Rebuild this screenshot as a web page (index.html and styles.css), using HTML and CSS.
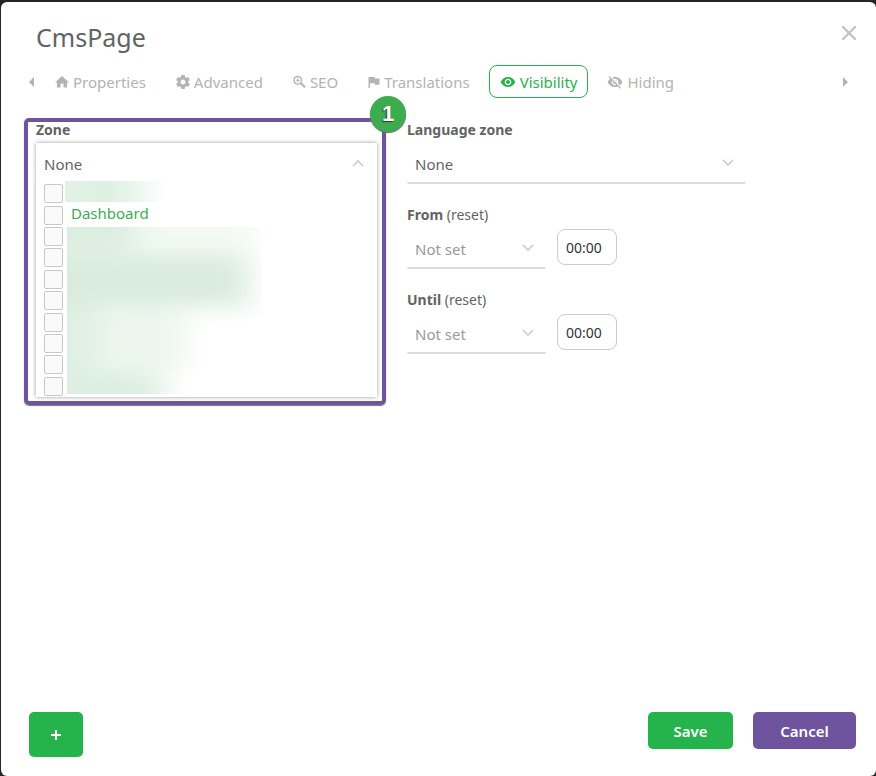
FILE: index.html
```html
<!DOCTYPE html>
<html lang="en">
<head>
<meta charset="utf-8">
<meta name="viewport" content="width=device-width, initial-scale=1">
<title>CmsPage</title>
<link rel="stylesheet" href="styles.css">
</head>
<body>
<main class="dialog" role="dialog" aria-labelledby="title">
  <header class="dialog-header">
    <h1 id="title">CmsPage</h1>
    <button class="close" type="button" aria-label="Close">
      <svg width="16" height="16" viewBox="0 0 16 16"><path d="M2 2l12 12M14 2L2 14" fill="none" stroke="#c2c2c2" stroke-width="2.4" stroke-linecap="round"/></svg>
    </button>
  </header>

  <nav class="tabs">
    <button class="scroll" type="button" aria-label="Previous tabs"><svg width="5" height="10" viewBox="0 0 5 10"><path d="M5 0v10L0 5z"/></svg></button>
    <div class="tab-list">
      <button class="tab" type="button"><svg width="14" height="14" viewBox="0 0 14 14"><path d="M7 1l7 6.500h-2V12.500H8.500V8.500h-3v4H2V7.500H0z"/></svg>Properties</button>
      <button class="tab" type="button"><svg width="14" height="14" viewBox="2 2 20 20"><path d="M19.430 12.980c.040-.320.070-.640.070-.980s-.030-.660-.070-.980l2.110-1.650c.190-.150.240-.420.120-.640l-2-3.460c-.120-.220-.390-.300-.610-.220l-2.490 1c-.520-.400-1.080-.730-1.690-.980l-.380-2.650C14.460 2.180 14.250 2 14 2h-4c-.250 0-.460.180-.490.420l-.380 2.650c-.610.250-1.170.590-1.690.980l-2.490-1c-.230-.090-.490 0-.610.220l-2 3.460c-.130.220-.070.490.120.640l2.110 1.650c-.040.320-.070.650-.070.980s.030.660.070.980l-2.110 1.650c-.190.150-.240.420-.120.640l2 3.460c.120.220.390.300.610.220l2.490-1c.520.400 1.080.730 1.690.980l.380 2.650c.030.240.240.420.490.420h4c.250 0 .460-.180.490-.420l.380-2.650c.610-.250 1.170-.590 1.690-.980l2.490 1c.230.090.490 0 .610-.220l2-3.460c.120-.220.070-.490-.120-.640l-2.110-1.650zM12 15.500c-1.930 0-3.500-1.570-3.500-3.500s1.570-3.500 3.500-3.500 3.500 1.570 3.500 3.500-1.570 3.500-3.500 3.500z"/></svg>Advanced</button>
      <button class="tab" type="button"><svg width="13" height="14" viewBox="0 0 13 14"><g fill="none" stroke="currentColor"><circle cx="4.800" cy="5.300" r="3.800" stroke-width="1.400"/><path d="M2.800 5.300h4M4.800 3.300v4"/><path d="M7.600 8l4.400 4.300" stroke-width="2"/></g></svg>SEO</button>
      <button class="tab" type="button"><svg width="12" height="14" viewBox="0 0 12 14"><path d="M.500 2h6l.400 1.500H11.500V9.800H7L6.600 8.300H2V13H.500z"/></svg>Translations</button>
      <button class="tab active" type="button" aria-current="page"><svg width="16" height="14" viewBox="0 2 24 20"><path d="M12 4.500C7 4.500 2.730 7.610 1 12c1.730 4.390 6 7.500 11 7.500s9.270-3.110 11-7.500c-1.730-4.390-6-7.500-11-7.500zM12 17c-2.760 0-5-2.240-5-5s2.240-5 5-5 5 2.240 5 5-2.240 5-5 5zm0-8c-1.660 0-3 1.340-3 3s1.340 3 3 3 3-1.340 3-3-1.340-3-3-3z"/></svg>Visibility</button>
      <button class="tab" type="button"><svg width="16" height="14" viewBox="0 2 24 20"><path d="M12 7c2.760 0 5 2.240 5 5 0 .650-.130 1.260-.360 1.830l2.920 2.920c1.510-1.260 2.700-2.890 3.430-4.750-1.730-4.390-6-7.500-11-7.500-1.400 0-2.740.250-3.980.700l2.160 2.160C10.740 7.130 11.350 7 12 7zM2 4.270l2.280 2.280.460.460C3.080 8.300 1.780 10.020 1 12c1.730 4.390 6 7.500 11 7.500 1.550 0 3.030-.300 4.380-.840l.420.420L19.730 22 21 20.730 3.270 3 2 4.270zM7.530 9.800l1.550 1.550c-.050.210-.080.430-.080.650 0 1.660 1.340 3 3 3 .220 0 .440-.030.650-.080l1.550 1.550c-.670.330-1.410.530-2.200.530-2.760 0-5-2.240-5-5 0-.790.200-1.530.530-2.200zm4.310-.780l3.150 3.150.020-.160c0-1.660-1.340-3-3-3l-.170.010z"/></svg>Hiding</button>
    </div>
    <button class="scroll" type="button" aria-label="Next tabs"><svg width="5" height="10" viewBox="0 0 5 10"><path d="M0 0v10l5-5z"/></svg></button>
  </nav>

  <form class="fields">
    <section class="zone">
      <span class="badge">1</span>
      <label class="field-label" for="zone">Zone</label>
      <div class="panel">
        <button id="zone" class="panel-head" type="button" aria-expanded="true">None
          <svg width="12" height="8" viewBox="0 0 12 8"><path d="M1 6l5-5 5 5" fill="none" stroke="#ccc" stroke-width="1.600"/></svg>
        </button>
        <div class="options">
          <div class="option"><input type="checkbox" aria-label="Option 1"></div>
          <div class="option"><input type="checkbox" id="dashboard"><label for="dashboard">Dashboard</label></div>
          <div class="option"><input type="checkbox" aria-label="Option 3"></div>
          <div class="option"><input type="checkbox" aria-label="Option 4"></div>
          <div class="option"><input type="checkbox" aria-label="Option 5"></div>
          <div class="option"><input type="checkbox" aria-label="Option 6"></div>
          <div class="option"><input type="checkbox" aria-label="Option 7"></div>
          <div class="option"><input type="checkbox" aria-label="Option 8"></div>
          <div class="option"><input type="checkbox" aria-label="Option 9"></div>
          <div class="option"><input type="checkbox" aria-label="Option 10"></div>
          <svg class="hidden-names" width="196" height="213" viewBox="0 0 196 213" aria-hidden="true">
            <defs>
              <linearGradient id="fade"><stop offset="0" stop-color="#e1f1e5"/><stop offset=".4" stop-color="#dfefe2"/><stop offset=".65" stop-color="#e8f4ea"/><stop offset="1" stop-color="#fff"/></linearGradient>
              <filter id="soft" x="-30%" y="-30%" width="160%" height="160%"><feGaussianBlur stdDeviation="15 10"/></filter>
              <clipPath id="area"><path d="M2 46h194v167H2z"/></clipPath>
            </defs>
            <path d="M0 0h100v21H0z" fill="url(#fade)"/>
            <g clip-path="url(#area)"><g filter="url(#soft)">
              <path d="M-40 20h228v110H-40z" fill="#f3f9f4"/>
              <path d="M-40 10h112v60H-40z" fill="#dceee0"/>
              <path d="M-40 74h222v50H-40z" fill="#d9ecdd"/>
              <path d="M-40 128h160v60H-40z" fill="#edf6ee"/>
              <path d="M-40 124h74v68H-40z" fill="#dff0e3"/>
              <path d="M-40 190h138v60H-40z" fill="#dcefe1"/>
            </g></g>
          </svg>
        </div>
      </div>
    </section>

    <section class="settings">
      <div class="field">
        <label class="field-label" for="language">Language zone</label>
        <div class="select"><select id="language"><option>None</option></select><svg width="12" height="8" viewBox="0 0 12 8"><path d="M1 1l5 5 5-5"/></svg></div>
      </div>
      <div class="field">
        <div class="field-label"><label for="from">From</label> <button class="reset" type="button">(reset)</button></div>
        <div class="date-row">
          <div class="select muted"><select id="from"><option>Not set</option></select><svg width="12" height="8" viewBox="0 0 12 8"><path d="M1 1l5 5 5-5"/></svg></div>
          <input class="time" type="text" value="00:00" aria-label="From time">
        </div>
      </div>
      <div class="field">
        <div class="field-label"><label for="until">Until</label> <button class="reset" type="button">(reset)</button></div>
        <div class="date-row">
          <div class="select muted"><select id="until"><option>Not set</option></select><svg width="12" height="8" viewBox="0 0 12 8"><path d="M1 1l5 5 5-5"/></svg></div>
          <input class="time" type="text" value="00:00" aria-label="Until time">
        </div>
      </div>
    </section>
  </form>

  <footer class="actions">
    <button class="btn add" type="button" aria-label="Add"><svg width="12" height="12" viewBox="0 0 12 12"><path d="M1 6h10M6 1v10" stroke="#fff" stroke-width="2"/></svg></button>
    <button class="btn save" type="button">Save</button>
    <button class="btn cancel" type="button">Cancel</button>
  </footer>
</main>
</body>
</html>
```
FILE: styles.css
```css
* { box-sizing: border-box; }
body {
  margin: 0;
  padding: 2px 0 0 1px;
  background: #272425;
  color: #636363;
  font: 15px/20px "Noto Sans", "Open Sans", sans-serif;
}
button, input, select { font: inherit; color: inherit; margin: 0; }
button { background: none; border: 0; padding: 0; cursor: pointer; }
svg { display: block; flex: none; fill: currentColor; }

.dialog {
  display: flex;
  flex-direction: column;
  min-height: calc(100vh - 2px);
  background: #fff;
  border-radius: 6px;
}
.dialog-header {
  display: flex;
  justify-content: space-between;
  align-items: flex-start;
  padding: 18px 19px 0 35px;
}
h1 { margin: 0; font-size: 25px; line-height: 34px; font-weight: 400; }
.close { padding: 5px 0; }

.tabs {
  display: flex;
  align-items: center;
  padding: 11px 28px 0 28px;
  color: #b3b3b3;
}
.tab-list { display: flex; flex: 1; gap: 8px; padding-left: 10px; }
.tab {
  display: flex;
  align-items: center;
  gap: 4px;
  height: 33px;
  padding: 0 10px;
  border: 1px solid transparent;
  border-radius: 8px;
}
.tab.active { color: #25b34b; border-color: #25b34b; }

.fields {
  display: grid;
  grid-template-columns: minmax(0, 362fr) minmax(0, 339fr);
  gap: 21px;
  align-items: start;
  padding: 20px 130px 0 23px;
}
.field-label { display: block; font-weight: 700; font-size: 14px; }

.zone {
  position: relative;
  padding: 0 5px 4px 8px;
  border: 4px solid #6e549f;
  border-radius: 5px;
  box-shadow: 0 1px 1px #777;
}
.zone .field-label { padding-bottom: 5px; line-height: 16px; }
.badge {
  position: absolute;
  top: -26px;
  right: -24px;
  width: 36px;
  height: 36px;
  border-radius: 50%;
  background: #3dac4f;
  box-shadow: 0 1px 1px #666;
  color: #fff;
  font: 700 22px/36px "Liberation Sans", sans-serif;
  text-align: center;
  text-shadow: -1px 1px 1px #333;
}
.panel { box-shadow: 0 0 4px #999; }
.panel-head {
  display: flex;
  justify-content: space-between;
  align-items: center;
  width: 100%;
  height: 40px;
  padding: 1px 13px 0 8px;
}
.options {
  position: relative;
  display: grid;
  grid-template-rows: repeat(10, 1fr);
  height: 214px;
  padding-left: 8px;
}
.option { display: flex; align-items: center; gap: 8px; color: #3dac4f; }
.option label { padding-bottom: 4px; line-height: 16px; }
.option input {
  appearance: none;
  flex: none;
  width: 19px;
  height: 19px;
  border: 1px solid #c8c8c8;
  border-radius: 2px;
  background: #fafafa;
}
.hidden-names { position: absolute; left: 29px; top: -2px; }

.settings { display: grid; gap: 21px; padding-top: 2px; }
.field { display: grid; gap: 4px; }
.reset { font-weight: 400; }
.select { position: relative; }
.select select {
  display: block;
  appearance: none;
  width: 100%;
  height: 40px;
  padding: 1px 24px 0 8px;
  border: 0;
  border-bottom: 2px solid #dcdcdc;
  border-radius: 2px;
  background: transparent;
}
.select svg {
  position: absolute;
  right: 12px;
  top: 15px;
  fill: none;
  stroke: #ccc;
  stroke-width: 1.6;
  pointer-events: none;
}
.muted { color: #999; }
.date-row {
  display: grid;
  grid-template-columns: minmax(0, 139px) 60px;
  gap: 11px;
  align-items: start;
}
.time {
  width: 100%;
  height: 36px;
  padding: 0 8px;
  border: 1px solid #ccc;
  border-radius: 8px;
  background: #fff;
  color: #333;
  font-size: 14px;
}

.actions {
  display: flex;
  align-items: flex-start;
  gap: 20px;
  margin-top: auto;
  padding: 20px 20px 19px 28px;
}
.btn {
  height: 37px;
  border-radius: 5px;
  color: #fff;
  font-weight: 600;
  background: #25b34b;
}
.add { display: grid; place-items: center; width: 54px; height: 45px; margin-right: auto; }
.save { width: 85px; }
.cancel { width: 103px; background: #6e549f; }
```
